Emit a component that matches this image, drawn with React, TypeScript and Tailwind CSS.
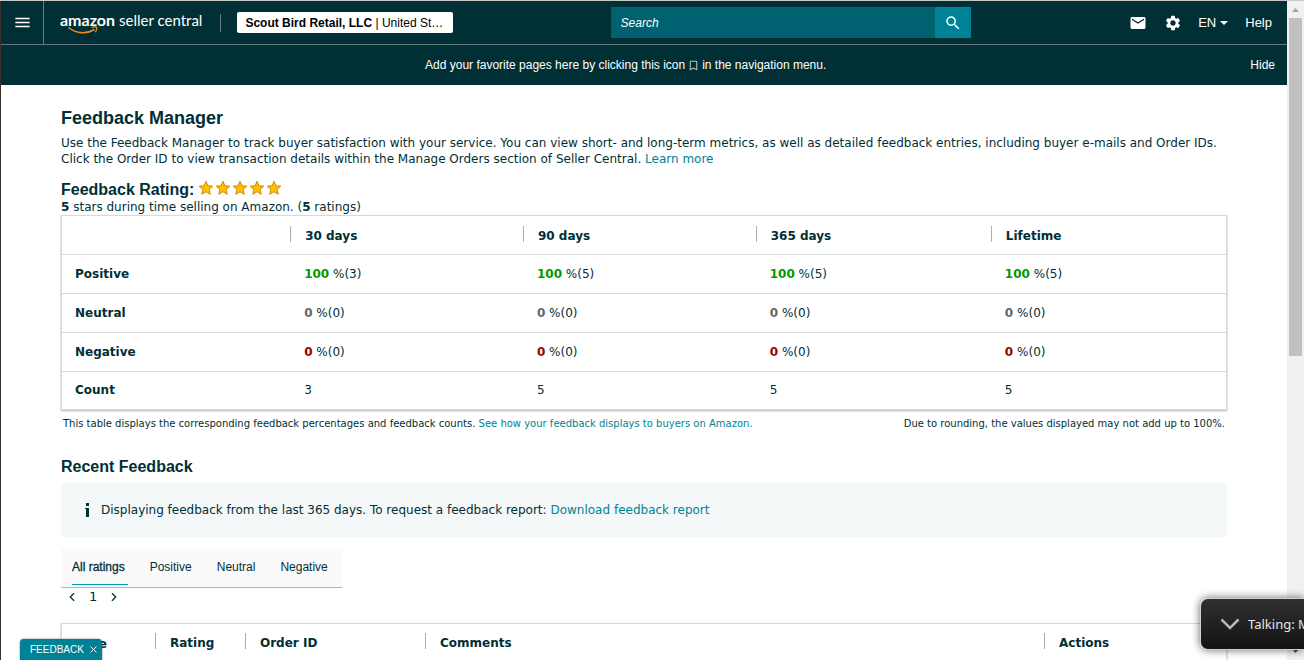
import { MdBookmarkBorder, MdEmail, MdMenu, MdSearch, MdSettings } from 'react-icons/md';
import { ChevronLeft, ChevronRight, X } from 'lucide-react';

const ratingRows = [
  { label: 'Positive', color: 'text-[#009a00]', values: [['100', '3'], ['100', '5'], ['100', '5'], ['100', '5']] },
  { label: 'Neutral', color: 'text-[#666666]', values: [['0', '0'], ['0', '0'], ['0', '0'], ['0', '0']] },
  { label: 'Negative', color: 'text-[#990000]', values: [['0', '0'], ['0', '0'], ['0', '0'], ['0', '0']] },
];

const periods = ['30 days', '90 days', '365 days', 'Lifetime'];
const counts = ['3', '5', '5', '5'];
const tabs = ['All ratings', 'Positive', 'Neutral', 'Negative'];

function Logo() {
  return (
    <a href="#" aria-label="amazon seller central" className="relative flex items-baseline gap-1 pb-[6px] text-white leading-5 font-['Lato',sans-serif]">
      <span className="text-base font-bold">amazon</span>
      <span className="text-[15px]">seller central</span>
      <svg className="absolute left-2 top-[18px]" width="31" height="9" viewBox="0 0 31 9" fill="none" stroke="#f08c1e">
        <path d="M0.5 1.5C8 7.5 18 8.5 26.5 3.5" strokeWidth="1.6" />
        <path d="M23.5 1.5C26 0.8 28 0.8 28.7 1.5C29 2.8 28.3 4.8 27 6.2" strokeWidth="1.2" />
      </svg>
    </a>
  );
}

function Header() {
  return (
    <header className="bg-[#002f36] text-white font-['Liberation_Sans',Arial,sans-serif]">
      <div className="flex items-stretch h-11 border-b border-[#667c80]">
        <button aria-label="Menu" className="flex items-center justify-center w-[43px] border-r border-[#667c80]">
          <MdMenu size={19} />
        </button>
        <div className="flex items-center flex-9 pl-4 pr-2">
          <Logo />
          <span className="w-px h-[18px] ml-[18px] bg-[#667c80]"></span>
          <button className="ml-4 w-[216px] h-[21px] px-2 bg-white rounded-xs text-black text-xs text-left truncate">
            <b>Scout Bird Retail, LLC</b> | United States
          </button>
        </div>
        <form className="flex self-center w-[360px] h-[31px]">
          <input
            type="text"
            aria-label="Search"
            placeholder="Search"
            className="flex-1 min-w-0 px-[10px] bg-[#006170] text-xs italic placeholder:text-white"
          />
          <button type="button" aria-label="Search" className="flex items-center justify-center w-9 bg-[#008296]">
            <MdSearch size={18} />
          </button>
        </form>
        <div className="flex items-center justify-end flex-5 pr-[15px] text-[13px]">
          <button aria-label="Messages" className="mr-[17px]"><MdEmail size={18} /></button>
          <button aria-label="Settings" className="mr-4"><MdSettings size={18} /></button>
          <button className="flex items-center gap-1 mr-[17px]">
            EN
            <svg width="8" height="4" viewBox="0 0 8 4" fill="currentColor"><path d="M0 0h8L4 4z" /></svg>
          </button>
          <a href="#">Help</a>
        </div>
      </div>
      <div className="flex items-center h-10 pr-3 text-xs">
        <p className="flex items-center justify-center flex-1">
          Add your favorite pages here by clicking this icon
          <MdBookmarkBorder size={13} className="mx-[2px] text-[#b0bec0]" />
          in the navigation menu.
        </p>
        <button>Hide</button>
      </div>
    </header>
  );
}

function Stars() {
  return (
    <span className="flex gap-[1px] pt-[3px]">
      {[1, 2, 3, 4, 5].map((n) => (
        <svg key={n} width="16" height="16" viewBox="0 0 16 16">
          <path
            d="M8 1.3L9.9 5.8L14.8 6.2L11.1 9.4L12.3 14.3L8 11.7L3.7 14.3L4.9 9.4L1.2 6.2L6.1 5.8Z"
            fill="#ffc000"
            stroke="#cf8a0c"
            strokeLinejoin="round"
          />
        </svg>
      ))}
    </span>
  );
}

function HeadCell({ children }: { children: string }) {
  return (
    <th className="p-0 text-left">
      <div className="h-4 -mt-px pl-[14px] border-l border-[#a3b1b3] leading-5">{children}</div>
    </th>
  );
}

function RatingTable() {
  return (
    <div className="border border-[#d5dbdb] shadow-[0_1px_2px_rgba(0,0,0,0.3)]">
      <table className="w-full table-fixed border-collapse">
        <colgroup>
          <col className="w-[19.6%]" />
          <col className="w-[20%]" />
          <col className="w-[20%]" />
          <col className="w-[20.2%]" />
          <col className="w-[20.2%]" />
        </colgroup>
        <thead>
          <tr className="h-[38px] border-b border-[#d5dbdb]">
            <td></td>
            {periods.map((period) => <HeadCell key={period}>{period}</HeadCell>)}
          </tr>
        </thead>
        <tbody>
          {ratingRows.map((row) => (
            <tr key={row.label} className="h-[39px] border-b border-[#d5dbdb]">
              <th className="pl-[13px] text-left">{row.label}</th>
              {row.values.map(([percent, count], i) => (
                <td key={i} className="pl-[14px]">
                  <b className={row.color}>{percent}</b> %({count})
                </td>
              ))}
            </tr>
          ))}
          <tr className="h-[38px]">
            <th className="pl-[13px] text-left">Count</th>
            {counts.map((count, i) => <td key={i} className="pl-[14px]">{count}</td>)}
          </tr>
        </tbody>
      </table>
    </div>
  );
}

function FeedbackTable() {
  return (
    <div className="mt-[17px] border border-[#d5dbdb] shadow-[0_1px_2px_rgba(0,0,0,0.3)]">
      <table className="w-full table-fixed border-collapse">
        <colgroup>
          <col className="w-[93px]" />
          <col className="w-[90px]" />
          <col className="w-[180px]" />
          <col />
          <col className="w-[182px]" />
        </colgroup>
        <thead>
          <tr className="h-9">
            <th className="pl-[13px] pt-1 text-left">Date</th>
            <HeadCell>Rating</HeadCell>
            <HeadCell>Order ID</HeadCell>
            <HeadCell>Comments</HeadCell>
            <HeadCell>Actions</HeadCell>
          </tr>
        </thead>
        <tbody>
          <tr className="h-10 border-t border-[#d5dbdb]">
            <td colSpan={5}></td>
          </tr>
        </tbody>
      </table>
    </div>
  );
}

function Scrollbar() {
  return (
    <div className="flex flex-col items-center justify-between w-[17px] h-full bg-[#f1f1f1]">
      <svg width="17" height="17" viewBox="0 0 17 17" fill="#a3a3a3"><path d="M8.5 7L12 11H5z" /></svg>
      <div className="flex-1 w-[13px]">
        <div className="h-[54%] bg-[#c1c1c1]"></div>
      </div>
      <svg width="17" height="17" viewBox="0 0 17 17" fill="#505050"><path d="M8.5 10L12 6H5z" /></svg>
    </div>
  );
}

export default function App() {
  return (
    <div className="relative flex h-screen overflow-hidden bg-white border-t border-t-[#c8c8c8] text-xs leading-4 text-[#002f36] font-['DejaVu_Sans',Verdana,sans-serif]">
      <div className="flex-1 min-w-0 border-l border-[#3b302c]">
        <Header />
        <main className="px-[60px] pt-[21px]">
          <h1 className="text-lg leading-6 font-bold font-['Liberation_Sans',Arial,sans-serif]">Feedback Manager</h1>
          <p className="mt-[5px]">
            Use the Feedback Manager to track buyer satisfaction with your service. You can view short- and long-term metrics, as well as detailed feedback entries, including buyer e-mails and Order IDs. Click the Order ID to view transaction details within the Manage Orders section of Seller Central.{' '}
            <a href="#" className="text-[#008296]">Learn more</a>
          </p>

          <div className="flex items-start mt-[10px] gap-1">
            <h2 className="pt-[3px] text-base leading-5 font-bold font-['Liberation_Sans',Arial,sans-serif]">Feedback Rating:</h2>
            <Stars />
          </div>
          <p className="leading-[15px]"><b>5</b> stars during time selling on Amazon. (<b>5</b> ratings)</p>
          <RatingTable />
          <div className="flex justify-between px-[2px] pt-[6px] text-[10px]">
            <p>
              This table displays the corresponding feedback percentages and feedback counts.{' '}
              <a href="#" className="text-[#008296]">See how your feedback displays to buyers on Amazon.</a>
            </p>
            <p>Due to rounding, the values displayed may not add up to 100%.</p>
          </div>

          <h2 className="mt-[25px] text-base leading-5 font-bold font-['Liberation_Sans',Arial,sans-serif]">Recent Feedback</h2>
          <div className="flex items-center h-[54px] mt-[6px] pl-6 bg-[#f4f8f9]">
            <svg width="5" height="14" viewBox="0 0 5 14" fill="currentColor" className="mr-[11px]">
              <path d="M1 0h3v3H1zM0 5h4v9H1V6H0z" />
            </svg>
            <p>
              Displaying feedback from the last 365 days. To request a feedback report:{' '}
              <a href="#" className="text-[#008296]">Download feedback report</a>
            </p>
          </div>

          <div className="flex w-[281px] h-[39px] mt-3 pl-[11px] gap-[22px] bg-[#fafafa] border-b border-[#b0b5b5] text-xs font-['Liberation_Sans',Arial,sans-serif]">
            {tabs.map((tab, i) => (
              <button
                key={tab}
                className={i === 0
                  ? 'h-9 pr-[3px] border-b border-[#00a0b4] text-[#002f36] [-webkit-text-stroke:0.3px]'
                  : 'h-9 pr-[3px] border-b border-transparent'}
              >
                {tab}
              </button>
            ))}
          </div>
          <div className="flex items-center h-[18px] pl-1 gap-2">
            <button aria-label="Previous page"><ChevronLeft size={14} /></button>
            <span className="px-[2px] text-[13px]">1</span>
            <button aria-label="Next page"><ChevronRight size={14} /></button>
          </div>
          <FeedbackTable />
        </main>
      </div>
      <Scrollbar />

      <button className="absolute bottom-0 left-5 flex items-center gap-1 w-[82px] h-[21px] pl-[10px] rounded-t bg-[#008296] text-white text-[10px] shadow-[0_0_2px_rgba(0,0,0,0.6)] font-['Liberation_Sans',Arial,sans-serif]">
        FEEDBACK <X size={11} className="shrink-0" />
      </button>

      <div className="absolute bottom-[10px] right-0 flex items-center w-[104px] h-[52px] pl-[19px] gap-2 rounded-l-lg border border-r-0 border-[#d0d0d0] bg-linear-to-b from-[#303032] to-[#131314] text-[#e6e6e6] text-[13px] whitespace-nowrap overflow-hidden shadow-[0_0_8px_rgba(0,0,0,0.6)] font-['Noto_Sans',sans-serif]">
        <svg width="20" height="12" viewBox="0 0 20 12" fill="none" stroke="#b5b5b5" strokeWidth="2.5" className="shrink-0">
          <path d="M1.5 1.5L10 10L18.5 1.5" />
        </svg>
        Talking: M
      </div>
    </div>
  );
}
